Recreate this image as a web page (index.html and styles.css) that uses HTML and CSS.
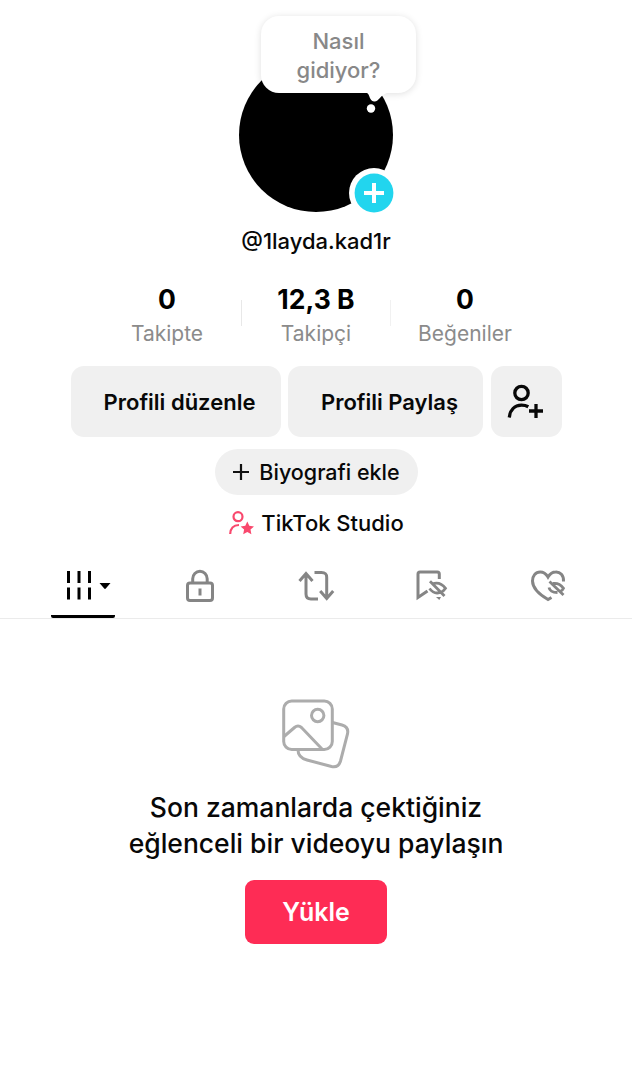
FILE: index.html
```html
<!DOCTYPE html>
<html lang="tr">
<head>
<meta charset="utf-8">
<title>TikTok profil</title>
<link rel="stylesheet" href="styles.css">
</head>
<body>
<main class="profile">
  <header class="identity">
    <div class="avatar">
      <div class="bubble"><span class="bubble-a">Nasıl</span><span class="bubble-b">gidiyor?</span></div>
      <svg class="tail" width="32" height="22" viewBox="0 0 32 22"><path d="M4 0C7 1 6 8 11 8.500C16 9 17 2 24 0Z" fill="#fff"/><circle cx="8" cy="15.500" r="4.200" fill="#fff"/></svg>
      <svg class="badge" width="50" height="50" viewBox="0 0 50 50"><circle cx="25" cy="25" r="25" fill="#fff"/><circle cx="25" cy="25" r="19.400" fill="#22d5ee"/><path d="M25 15v20M15 25h20" stroke="#fff" stroke-width="4"/></svg>
    </div>
    <h1 class="handle"><span>@1layda.kad1r</span></h1>
  </header>
  <section class="stats">
    <div class="stat"><b>0</b><span class="s1">Takipte</span></div>
    <i class="divider"></i>
    <div class="stat"><b class="count">12,3 B</b><span class="s2">Takipçi</span></div>
    <i class="divider light"></i>
    <div class="stat"><b>0</b><span class="s3">Beğeniler</span></div>
  </section>
  <section class="actions">
    <button class="action edit"><span>Profili düzenle</span></button>
    <button class="action share"><span>Profili Paylaş</span></button>
    <button class="action add" aria-label="Arkadaş ekle"><svg width="40" height="40" viewBox="0 0 40 40" fill="none" stroke="#080808" stroke-width="3.300"><circle cx="15.500" cy="11" r="6.700"/><path d="M3.300 35.500C3.900 28 8.500 23.200 15.500 23.200C18.300 23.200 20.500 23.800 22.300 24.800M30 22v14M23 29h14"/></svg></button>
  </section>
  <button class="bio"><svg width="18" height="18" viewBox="0 0 18 18"><path d="M9 1v16M1 9h16" stroke="#111" stroke-width="2.200"/></svg><span>Biyografi ekle</span></button>
  <div class="studio"><svg width="26" height="26" viewBox="0 0 26 26"><g fill="none" stroke="#f9486d" stroke-width="2.200"><circle cx="10" cy="6.700" r="4.500"/><path d="M2.200 24C2.400 18.400 5.300 15.200 11 15"/></g><path d="M19.300 11.500l2 4.300 4.700.6-3.500 3.200.9 4.700-4.100-2.300-4.100 2.300.9-4.700-3.500-3.200 4.700-.6z" fill="#f9486d"/></svg><span>TikTok Studio</span></div>
  <nav class="tabs">
    <div class="tab active"><svg width="64" height="40" viewBox="0 0 64 40"><path d="M17.500 6v12M28 6v12M38.500 6v12M17.500 22.500v12M28 22.500v12M38.500 22.500v12" stroke="#000" stroke-width="3"/><path d="M48.500 18h11L55 23.300q-1 1.200-2 0z"/></svg></div>
    <div class="tab"><svg width="40" height="40" viewBox="0 0 40 40" fill="none" stroke="#858585" stroke-width="3"><rect x="7.500" y="18" width="25" height="17.500" rx="2.500"/><path d="M12.700 18v-4.200a7.200 7.500 0 0 1 14.500 0V18M20 23.500v7"/></svg></div>
    <div class="tab"><svg width="40" height="40" viewBox="0 0 40 40" fill="none" stroke="#858585" stroke-width="3"><path d="M3.500 16l6.500-7.500 6.500 7.500M10 9v20c0 3.500 1.500 5 5 5h7M18.500 7.500h7c4 0 5.200 1.500 5.200 5V33M24.200 26l6.500 7.500 6.500-7.500"/></svg></div>
    <div class="tab"><svg width="40" height="40" viewBox="0 0 40 40" fill="none" stroke="#858585" stroke-width="3"><path d="M27.300 14V9q0-2-2-2H8q-2 0-2 2v23.500l9.500-6.500"/><path d="M17.500 23.500q4.500 6 10.500 4M20 19q8-3 13.500 4.300q-2 3.200-5 4.200M18 16.200L32.500 31" stroke-width="2.800"/><path d="M24 32h5l-1.700 3z" fill="#858585" stroke="none"/></svg></div>
    <div class="tab"><svg width="40" height="40" viewBox="0 0 40 40" fill="none" stroke="#858585" stroke-width="3"><path d="M34.500 16.500C35 10 31 6.800 26.700 7Q22 7 19 12Q16 7 11.200 7C6.500 7 3.400 11 3.500 16C3.600 24 13 31 19 34.500L22.500 32.500"/><path d="M20 22.500q1 5 8.500 5M24 18.500q6-1 10.500 4.800q-1 2.500-3.500 3.300M20.500 16.500L34.500 30" stroke-width="2.800"/></svg></div>
  </nav>
  <section class="empty">
    <svg width="70" height="72" viewBox="0 0 70 72" fill="none" stroke="#acacac" stroke-width="3"><rect x="2.700" y="3" width="48.600" height="48.500" rx="8"/><circle cx="36.700" cy="17.500" r="6.200"/><path d="M3 38.500l10.500-9q3.500-3 7 0L41 51M51.500 24.500l9.500 2.500q7 2 5.500 9l-7 27q-2 7-9 5.500L26 62q-9-2.500-9-10"/></svg>
    <h2 class="message"><span class="m1">Son zamanlarda çektiğiniz</span><span class="m2">eğlenceli bir videoyu paylaşın</span></h2>
    <button class="upload"><span>Yükle</span></button>
  </section>
</main>
</body>
</html>
```
FILE: styles.css
```css
* { box-sizing: border-box; }
body { margin: 0; background: #fff; color: #080808; font-family: Inter, "Noto Sans", sans-serif; }
button { border: 0; margin: 0; padding: 0; font: inherit; color: inherit; }
svg { display: block; flex: none; }
span, b { white-space: nowrap; }
.profile { width: 632px; height: 1080px; display: flex; flex-direction: column; align-items: center; overflow: hidden; }
.identity { padding-top: 58px; display: flex; flex-direction: column; align-items: center; }
.avatar { position: relative; width: 154px; height: 154px; border-radius: 50%; background: #000; }
.bubble { position: absolute; left: 22px; top: -42px; width: 155px; height: 77px; padding-top: 11px; border-radius: 18px; background: #fff; box-shadow: 0 1px 7px rgba(0,0,0,.13); color: #888; font-size: 22px; line-height: 29px; font-weight: 500; display: flex; flex-direction: column; align-items: center; }
.tail { position: absolute; left: 124px; top: 34.500px; }
.badge { position: absolute; left: 110px; top: 109.500px; }
.handle { margin: 14px 0 0; height: 30px; font-size: 22px; line-height: 30px; font-weight: 550; }
.stats { margin-top: 29px; height: 66px; display: flex; align-items: flex-start; }
.stat { width: 148px; display: flex; flex-direction: column; align-items: center; }
.stat b { font-size: 26.500px; line-height: 34px; height: 34px; font-weight: 700; color: #000; margin-top: -3px; }
.stat span { font-size: 21px; line-height: 30px; margin-top: 3px; color: #8b8b8b; }
.divider { width: 1px; height: 26px; margin-top: 15px; background: #e8e8e8; }
.light { background: #f1f1f1; }
.actions { margin-top: 15px; display: flex; gap: 7.500px; }
.action { height: 71px; border-radius: 13px; background: #f0f0f0; font-size: 22px; line-height: 30px; font-weight: 560; display: flex; align-items: center; justify-content: center; }
.edit { width: 210px; padding-left: 8px; }
.share { width: 195px; padding-left: 8px; }
.add { width: 71px; }
.bio { margin-top: 12px; width: 203px; height: 46px; border-radius: 23px; background: #f0f0f0; display: flex; align-items: center; justify-content: center; gap: 9px; font-size: 21.500px; font-weight: 550; }
.studio { margin-top: 12px; height: 31px; display: flex; align-items: center; gap: 7px; font-size: 22px; font-weight: 550; }
.tabs { margin-top: 27px; width: 632px; height: 54px; padding: 0 25px; display: grid; grid-template-columns: repeat(5, 1fr); border-bottom: 1px solid #ebebeb; }
.tab { display: flex; justify-content: center; }
.active { width: 64px; justify-self: center; border-bottom: 3px solid #000; border-radius: 2px; }
.empty { margin-top: 79px; display: flex; flex-direction: column; align-items: center; }
.message { margin: 19px 0 0; font-size: 26.500px; line-height: 36px; font-weight: 550; display: flex; flex-direction: column; align-items: center; }
.upload { margin-top: 19px; width: 142px; height: 64px; border-radius: 9px; background: #fe2c55; color: #fff; font-size: 25px; font-weight: 600; display: flex; align-items: center; justify-content: center; }
```
